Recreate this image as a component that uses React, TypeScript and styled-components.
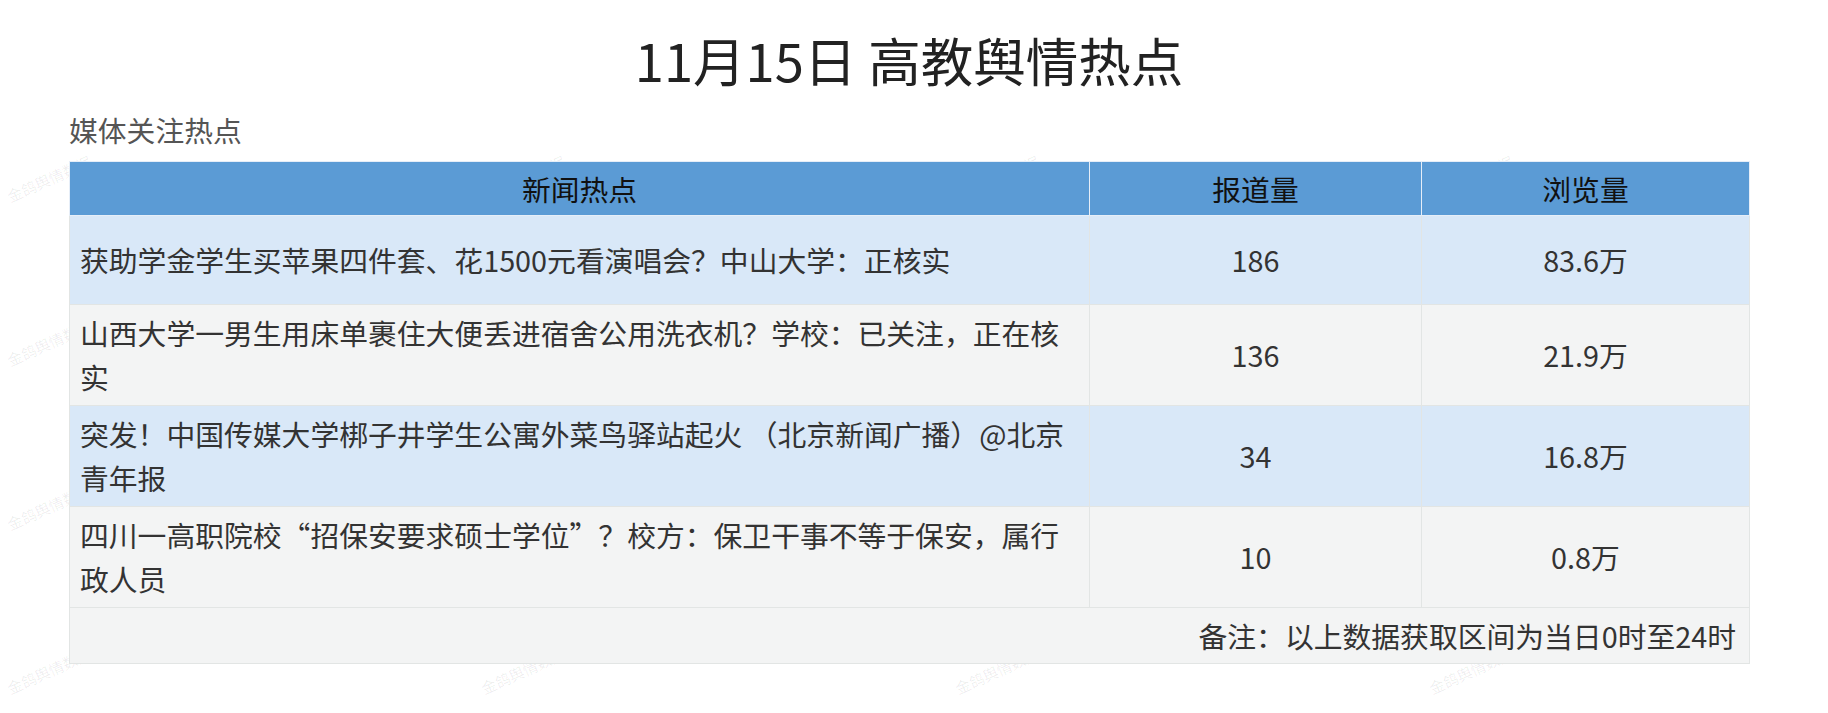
import React from 'react'
import styled, { createGlobalStyle } from 'styled-components'

interface HotRow {
  title: string
  reports: string
  views: string
}

const rows: HotRow[] = [
  { title: '获助学金学生买苹果四件套、花1500元看演唱会？中山大学：正核实', reports: '186', views: '83.6万' },
  { title: '山西大学一男生用床单裹住大便丢进宿舍公用洗衣机？学校：已关注，正在核实', reports: '136', views: '21.9万' },
  { title: '突发！中国传媒大学梆子井学生公寓外菜鸟驿站起火 （北京新闻广播）@北京青年报', reports: '34', views: '16.8万' },
  { title: '四川一高职院校“招保安要求硕士学位”？校方：保卫干事不等于保安，属行政人员', reports: '10', views: '0.8万' },
]

const GlobalStyle = createGlobalStyle`
  html, body {
    margin: 0;
    padding: 0;
    background: #fff;
  }
  body {
    font-family: "Noto Sans CJK SC", "Noto Sans", sans-serif;
    overflow: hidden;
  }
`

const Page = styled.div`
  position: relative;
  width: 1828px;
  height: 713px;
  padding: 27px 79px 0 69px;
  box-sizing: border-box;
  overflow: hidden;
`

const WatermarkLayer = styled.div`
  position: absolute;
  inset: 0;
  z-index: 0;
  pointer-events: none;
`

const Mark = styled.span`
  position: absolute;
  font-size: 15px;
  color: rgba(0, 0, 0, 0.07);
  transform: rotate(-24deg);
  white-space: nowrap;
`

const Content = styled.div`
  position: relative;
  z-index: 1;
  display: flex;
  flex-direction: column;
`

const Title = styled.h1`
  margin: 0;
  font-size: 52.5px;
  line-height: 64px;
  font-weight: 400;
  color: #222;
  text-align: center;
`

const SubTitle = styled.h2`
  margin: 19px 0 0;
  font-size: 28.8px;
  line-height: 40px;
  font-weight: 400;
  color: #555;
`

const Table = styled.table`
  margin-top: 11px;
  width: 1680px;
  table-layout: fixed;
  border-collapse: collapse;
  border: 1px solid #e2e5e4;
  font-size: 28.8px;
`

const HeadCell = styled.th`
  height: 53px;
  padding: 0;
  background: #5b9bd5;
  color: #111;
  font-weight: 400;
  text-align: center;
  border: 1px solid #e6eef8;
  line-height: 40px;
`

const BodyRow = styled.tr<{ $alt: boolean }>`
  height: 89px;
  background: ${({ $alt }) => ($alt ? '#f3f4f4' : '#d9e8f8')};
`

const Cell = styled.td<{ $align?: string }>`
  padding: 6px 10px;
  line-height: 44px;
  color: #333;
  text-align: ${({ $align }) => $align || 'center'};
  vertical-align: middle;
  border: 1px solid #e2e5e4;
`

const NoteCell = styled.td`
  height: 55px;
  padding: 0 13px 0 10px;
  background: #f3f4f4;
  color: #333;
  text-align: right;
  line-height: 44px;
  border: 1px solid #e2e5e4;
`

const markSpots: { x: number; y: number }[] = []
for (let r = 0; r < 4; r++) {
  for (let c = 0; c < 4; c++) {
    markSpots.push({ x: 4 + c * 474, y: 168 + r * 164 })
  }
}

const App = () => {
  return (
    <Page>
      <GlobalStyle />
      {/* faint tiled watermark behind the table */}
      <WatermarkLayer>
        {markSpots.map((m, i) => (
          <Mark key={i} style={{ left: m.x, top: m.y }}>
            金鸽舆情数据
          </Mark>
        ))}
      </WatermarkLayer>

      <Content>
        <Title>11月15日 高教舆情热点</Title>
        <SubTitle>媒体关注热点</SubTitle>
        <Table>
          <colgroup>
            <col style={{ width: 1020 }} />
            <col style={{ width: 332 }} />
            <col style={{ width: 328 }} />
          </colgroup>
          <thead>
            <tr>
              <HeadCell>新闻热点</HeadCell>
              <HeadCell>报道量</HeadCell>
              <HeadCell>浏览量</HeadCell>
            </tr>
          </thead>
          <tbody>
            {rows.map((row, i) => (
              <BodyRow key={row.reports} $alt={i % 2 === 1}>
                <Cell $align="left">{row.title}</Cell>
                <Cell>{row.reports}</Cell>
                <Cell>{row.views}</Cell>
              </BodyRow>
            ))}
            <tr>
              <NoteCell colSpan={3}>备注：以上数据获取区间为当日0时至24时</NoteCell>
            </tr>
          </tbody>
        </Table>
      </Content>
    </Page>
  )
}

export default App
